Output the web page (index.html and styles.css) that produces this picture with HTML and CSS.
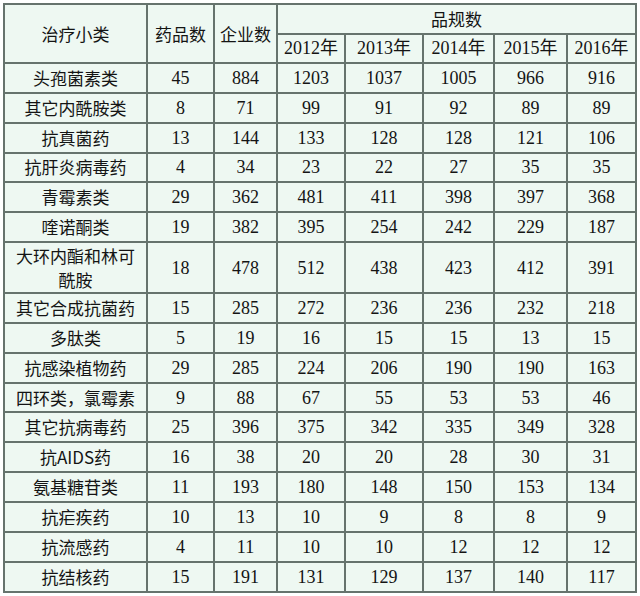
FILE: index.html
```html
<!DOCTYPE html>
<html>
<head>
<meta charset="utf-8">
<link rel="stylesheet" href="styles.css">
</head>
<body>
<div class="wrap">
<table class="tbl">
<colgroup>
<col class="c1"><col class="c2"><col class="c3"><col class="c4"><col class="c5"><col class="c6"><col class="c7"><col class="c8">
</colgroup>
<thead>
<tr class="h1">
<th rowspan="2" class="cn">治疗小类</th>
<th rowspan="2" class="cn">药品数</th>
<th rowspan="2" class="cn">企业数</th>
<th colspan="5" class="cn">品规数</th>
</tr>
<tr class="h2">
<th>2012年</th><th>2013年</th><th>2014年</th><th>2015年</th><th>2016年</th>
</tr>
</thead>
<tbody>
<tr><td class="cn">头孢菌素类</td><td>45</td><td>884</td><td>1203</td><td>1037</td><td>1005</td><td>966</td><td>916</td></tr>
<tr><td class="cn">其它内酰胺类</td><td>8</td><td>71</td><td>99</td><td>91</td><td>92</td><td>89</td><td>89</td></tr>
<tr><td class="cn">抗真菌药</td><td>13</td><td>144</td><td>133</td><td>128</td><td>128</td><td>121</td><td>106</td></tr>
<tr><td class="cn">抗肝炎病毒药</td><td>4</td><td>34</td><td>23</td><td>22</td><td>27</td><td>35</td><td>35</td></tr>
<tr><td class="cn">青霉素类</td><td>29</td><td>362</td><td>481</td><td>411</td><td>398</td><td>397</td><td>368</td></tr>
<tr><td class="cn">喹诺酮类</td><td>19</td><td>382</td><td>395</td><td>254</td><td>242</td><td>229</td><td>187</td></tr>
<tr class="dbl"><td class="cn"><div class="ln">大环内酯和林可</div><div class="ln">酰胺</div></td><td>18</td><td>478</td><td>512</td><td>438</td><td>423</td><td>412</td><td>391</td></tr>
<tr><td class="cn">其它合成抗菌药</td><td>15</td><td>285</td><td>272</td><td>236</td><td>236</td><td>232</td><td>218</td></tr>
<tr><td class="cn">多肽类</td><td>5</td><td>19</td><td>16</td><td>15</td><td>15</td><td>13</td><td>15</td></tr>
<tr><td class="cn">抗感染植物药</td><td>29</td><td>285</td><td>224</td><td>206</td><td>190</td><td>190</td><td>163</td></tr>
<tr><td class="cn">四环类，氯霉素</td><td>9</td><td>88</td><td>67</td><td>55</td><td>53</td><td>53</td><td>46</td></tr>
<tr><td class="cn">其它抗病毒药</td><td>25</td><td>396</td><td>375</td><td>342</td><td>335</td><td>349</td><td>328</td></tr>
<tr><td class="cn">抗AIDS药</td><td>16</td><td>38</td><td>20</td><td>20</td><td>28</td><td>30</td><td>31</td></tr>
<tr><td class="cn">氨基糖苷类</td><td>11</td><td>193</td><td>180</td><td>148</td><td>150</td><td>153</td><td>134</td></tr>
<tr><td class="cn">抗疟疾药</td><td>10</td><td>13</td><td>10</td><td>9</td><td>8</td><td>8</td><td>9</td></tr>
<tr><td class="cn">抗流感药</td><td>4</td><td>11</td><td>10</td><td>10</td><td>12</td><td>12</td><td>12</td></tr>
<tr><td class="cn">抗结核药</td><td>15</td><td>191</td><td>131</td><td>129</td><td>137</td><td>140</td><td>117</td></tr>
</tbody>
</table>
</div>
</body>
</html>
```
FILE: styles.css
```css
html, body {
  margin: 0;
  padding: 0;
  background: #ffffff;
}
.wrap {
  padding: 3px 0 0 3px;
}
.tbl {
  border-collapse: collapse;
  table-layout: fixed;
  width: 634px;
  background: #eef8f2;
  color: #141414;
  font-family: "Liberation Serif", "Noto Sans CJK SC", serif;
  font-size: 18px;
}
.c1 { width: 143px; }
.c2 { width: 67px; }
.c3 { width: 63px; }
.c4 { width: 68px; }
.c5 { width: 78px; }
.c6 { width: 71px; }
.c7 { width: 73px; }
.c8 { width: 69px; }
.tbl th, .tbl td {
  border: 2px solid #66736d;
  padding: 0;
  text-align: center;
  vertical-align: middle;
  font-weight: normal;
  line-height: 22px;
  height: 28px;
  box-sizing: border-box;
}
.tbl tbody td {
  height: 29.85px;
}
.tbl thead th {
  height: 29.5px;
}
.tbl .cn {
  font-family: "Noto Sans CJK SC", sans-serif;
  font-size: 17px;
}
.tbl tr.dbl td {
  height: 51px;
}
.ln {
  line-height: 24px;
  height: 24px;
  overflow: hidden;
}
```
